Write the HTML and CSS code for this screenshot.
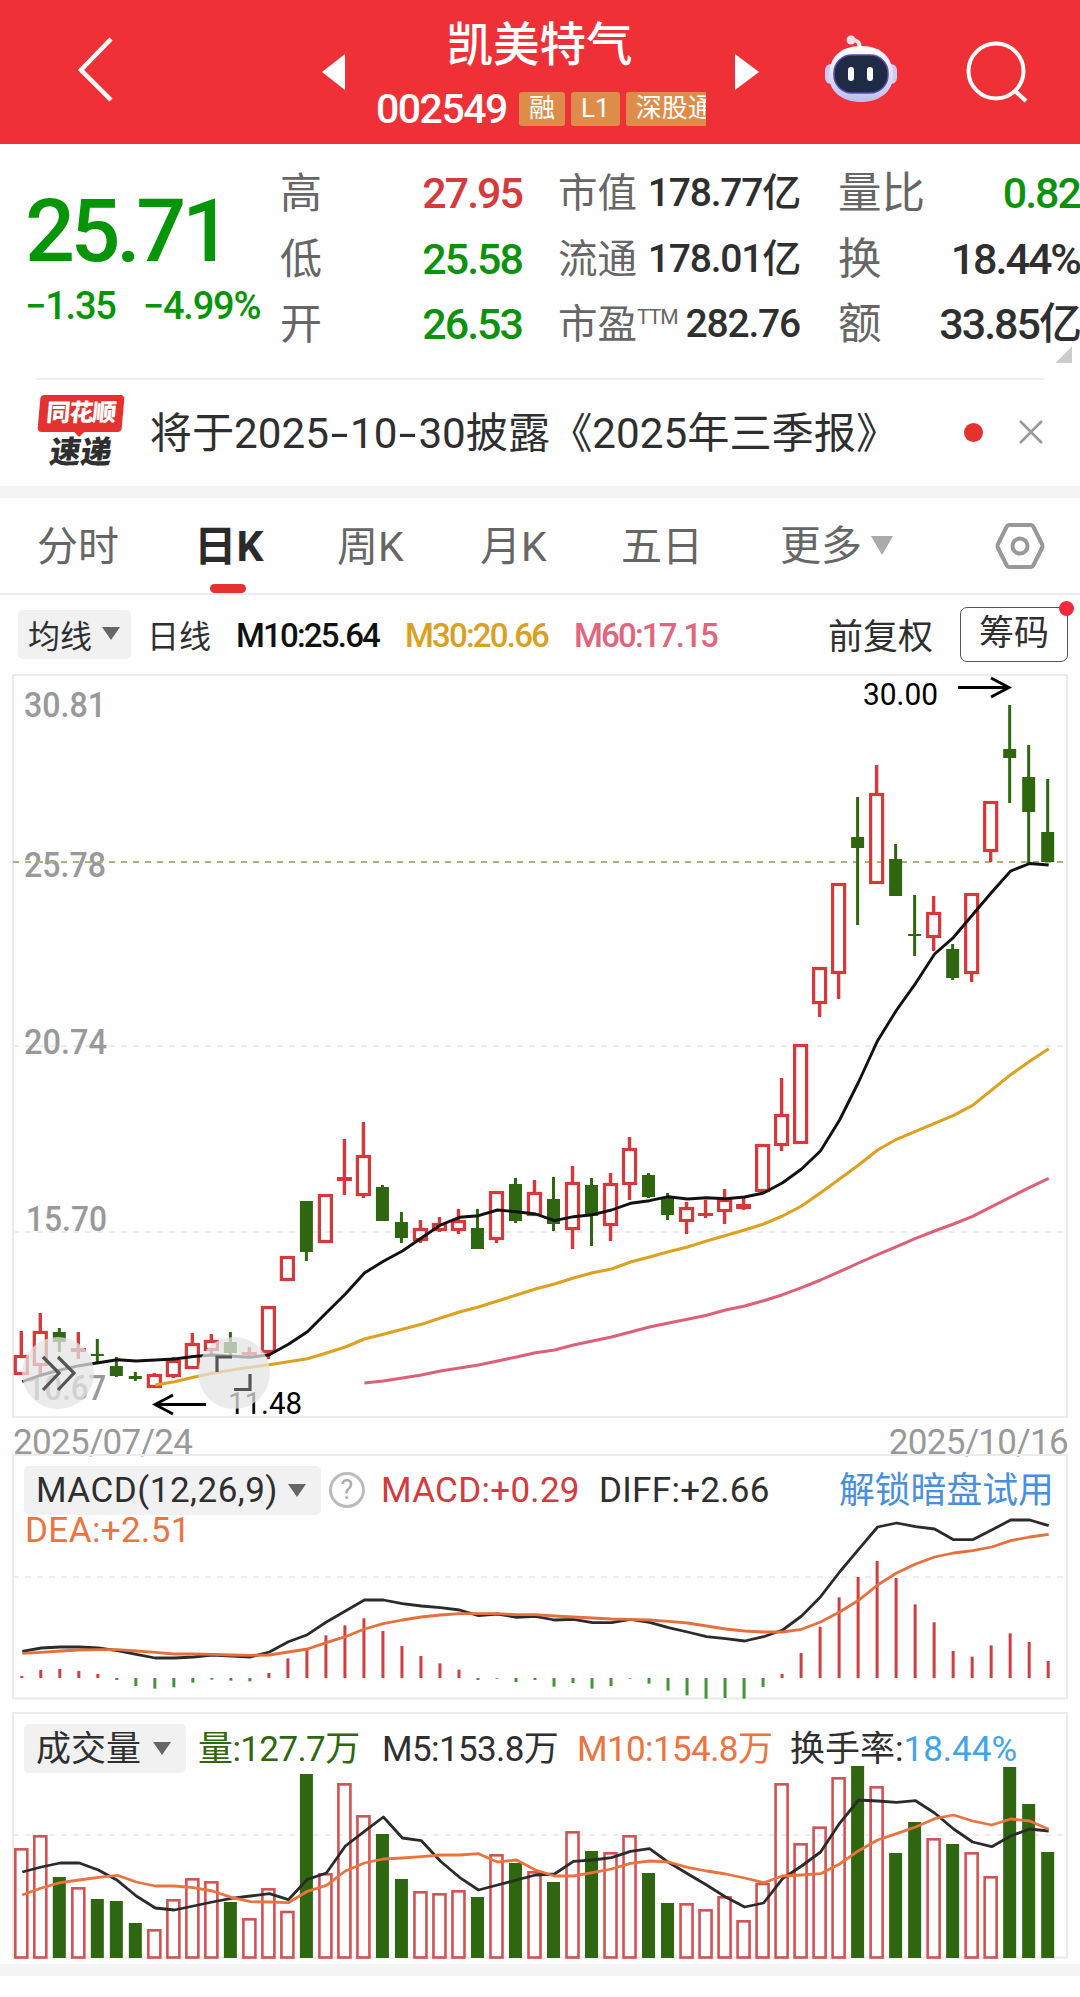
FILE: index.html
```html
<!DOCTYPE html>
<html lang="zh-CN">
<head>
  <meta charset="UTF-8">
  <meta name="viewport" content="width=device-width, initial-scale=1.0">
  <title>凯美特气 002549</title>
  <link rel="stylesheet" href="styles.css">
</head>
<body>
  <header class="topbar">
    <svg class="back" width="40" height="70" viewBox="0 0 40 70"><path d="M36 4 L6 35 L36 65" fill="none" stroke="#fff" stroke-width="4.5"/></svg>
    <svg class="prev" width="24" height="36" viewBox="0 0 24 36"><path d="M0 18 L23 0 V36 Z" fill="#fff"/></svg>
    <div class="stock">
      <h1>凯美特气</h1>
      <div class="code-row">
        <span class="code">002549</span>
        <span class="tag">融</span>
        <span class="tag">L1</span>
        <span class="tag tag-cut">深股通</span>
      </div>
    </div>
    <svg class="next" width="24" height="36" viewBox="0 0 24 36"><path d="M24 18 L0 0 V36 Z" fill="#fff"/></svg>
    <svg class="robot" width="76" height="72" viewBox="0 0 76 72">
      <defs>
        <linearGradient id="shell" x1="0" y1="0" x2="0" y2="1">
          <stop offset="0" stop-color="#fff"/>
          <stop offset=".6" stop-color="#dcd8fa"/>
          <stop offset="1" stop-color="#b9c0ee"/>
        </linearGradient>
      </defs>
      <path d="M36 14 C38 8 33 6 29 6" fill="none" stroke="#eee4f6" stroke-width="4" stroke-linecap="round"/>
      <circle cx="28" cy="6" r="4.5" fill="#f6dcea"/>
      <rect x="2" y="30" width="12" height="20" rx="6" fill="#c9cdf5"/>
      <rect x="62" y="30" width="12" height="20" rx="6" fill="#c9cdf5"/>
      <path d="M38 12 C59 12 70 24 70 42 C70 58 56 68 38 68 C20 68 6 58 6 42 C6 24 17 12 38 12 Z" fill="url(#shell)"/>
      <rect x="11" y="21" width="54" height="38" rx="18" fill="#1f2a44" stroke="#5a4bb0" stroke-width="1.500"/>
      <rect x="25" y="33" width="6" height="14" rx="3" fill="#fff"/>
      <rect x="44" y="33" width="6" height="14" rx="3" fill="#fff"/>
    </svg>
    <svg class="search" width="64" height="64" viewBox="0 0 64 64"><circle cx="31" cy="30" r="27.5" fill="none" stroke="#fff" stroke-width="4"/><path d="M49 49 L61 60" stroke="#fff" stroke-width="4"/></svg>
  </header>

  <section class="quote">
    <div class="price">
      <div class="last">25.71</div>
      <div class="change"><span>−1.35</span><span>−4.99%</span></div>
    </div>
    <dl class="stats stats-a">
      <dt>高</dt><dd class="up">27.95</dd>
      <dt>低</dt><dd class="down">25.58</dd>
      <dt>开</dt><dd class="down">26.53</dd>
    </dl>
    <dl class="stats stats-b">
      <dt>市值</dt><dd>178.77亿</dd>
      <dt>流通</dt><dd>178.01亿</dd>
      <dt>市盈<sup>TTM</sup></dt><dd>282.76</dd>
    </dl>
    <dl class="stats stats-c">
      <dt>量比</dt><dd class="down">0.82</dd>
      <dt>换</dt><dd>18.44%</dd>
      <dt>额</dt><dd>33.85亿</dd>
    </dl>
    <i class="corner"></i>
  </section>

  <section class="notice">
    <div class="brand">
      <span class="brand-top">同花顺</span>
      <span class="brand-bottom">速递</span>
    </div>
    <p>将于2025<b>-</b>10<b>-</b>30披露《2025年三季报》</p>
    <i class="dot"></i>
    <svg width="26" height="26" viewBox="0 0 26 26"><path d="M2 2 L24 24 M24 2 L2 24" stroke="#999" stroke-width="2.6"/></svg>
  </section>

  <nav class="tabs">
    <a>分时</a>
    <a class="active">日K</a>
    <a>周K</a>
    <a>月K</a>
    <a>五日</a>
    <a class="more">更多<i class="caret caret-light"></i></a>
    <svg class="setting" width="50" height="48" viewBox="0 0 50 48">
      <path d="M14 3 H36 Q37.500 3 38.500 5 L47 22 Q48 24 47 26 L38.500 43 Q37.500 45 36 45 H14 Q12.500 45 11.500 43 L3 26 Q2 24 3 22 L11.500 5 Q12.500 3 14 3 Z" fill="none" stroke="#999" stroke-width="4"/>
      <circle cx="25" cy="24" r="7.500" fill="none" stroke="#999" stroke-width="4"/>
    </svg>
  </nav>

  <div class="ma-row">
    <span class="select select-ma">均线<i class="caret"></i></span>
    <span class="period">日线</span>
    <span class="ma ma10">M10:25.64</span>
    <span class="ma ma30">M30:20.66</span>
    <span class="ma ma60">M60:17.15</span>
    <span class="adjust">前复权</span>
    <span class="chips">筹码<i class="dot"></i></span>
  </div>

  <svg id="kline" class="kline" width="1080" height="752" viewBox="0 670 1080 752"></svg>
  <div class="dates"><span>2025/07/24</span><span>2025/10/16</span></div>

  <section class="panel macd">
    <svg id="macd" class="plot" width="1080" height="246" viewBox="0 1454 1080 246"></svg>
    <div class="panel-head">
      <span class="select select-macd">MACD(12,26,9)<i class="caret"></i></span>
      <span class="help">?</span>
      <span class="v-macd">MACD:+0.29</span>
      <span class="v-diff">DIFF:+2.66</span>
      <a class="unlock">解锁暗盘试用</a>
    </div>
    <div class="v-dea">DEA:+2.51</div>
  </section>

  <section class="panel volume">
    <svg id="volume" class="plot" width="1080" height="250" viewBox="0 1710 1080 250"></svg>
    <div class="panel-head">
      <span class="select select-vol"><span>成交量</span><i class="caret"></i></span>
      <span class="v-vol">量:127.7万</span>
      <span class="v-m5">M5:153.8万</span>
      <span class="v-m10">M10:154.8万</span>
      <span class="v-rate">换手率:<em>18.44%</em></span>
    </div>
  </section>
  <div class="band"></div>

  <script src="charts.js"></script>
</body>
</html>
```
FILE: styles.css
```css
* {
  box-sizing: border-box;
}

body {
  margin: 0;
  width: 1080px;
  height: 1997px;
  overflow: hidden;
  background: #fefefe;
  color: #2f2f2f;
  font-family: Roboto, "Noto Sans CJK SC", sans-serif;
}

i, em {
  font-style: normal;
}

/* Top bar */
.topbar {
  display: flex;
  height: 144px;
  background: #ef3137;
  color: #fff;
}

.back { margin: 35px 0 0 75px; }
.prev { margin: 54px 0 0 207px; }
.next { margin: 54px 0 0 29px; }
.robot { margin: 34px 0 0 64px; }
.search { margin: 41px 0 0 66px; }

.stock {
  width: 330px;
  margin-left: 30px;
}

.stock h1 {
  margin: 14px 0 0;
  padding-right: 3px;
  font-size: 46.5px;
  font-weight: 500;
  line-height: 62px;
  text-align: center;
}

.code-row {
  display: flex;
  align-items: center;
  height: 66px;
  overflow: hidden;
}

.code {
  width: 143px;
  font-size: 41px;
  font-weight: 500;
  letter-spacing: -1.5px;
}

.tag {
  flex: none;
  height: 34px;
  margin-right: 6px;
  padding: 0 10px;
  border-radius: 3px;
  background: #df8c4a;
  font-size: 26px;
  line-height: 33px;
}

.tag-cut {
  width: 80px;
  margin-right: 0;
  border-radius: 3px 0 0 3px;
  overflow: hidden;
  white-space: nowrap;
}

/* Quote */
.quote {
  position: relative;
  display: flex;
  height: 234px;
  padding-top: 17px;
}

.price {
  width: 280px;
  padding-left: 25px;
  color: #079508;
}

.last {
  height: 104px;
  padding-top: 22px;
  font-size: 88px;
  font-weight: 500;
  line-height: 96px;
  letter-spacing: -4.4px;
}

.change {
  display: flex;
  gap: 27px;
  margin-top: 19px;
  font-size: 38px;
  font-weight: 500;
  line-height: 44px;
  letter-spacing: -1.2px;
}

.stats {
  display: grid;
  grid-template-columns: 88px 1fr;
  grid-auto-rows: 65.5px;
  margin: 0;
  line-height: 65px;
  white-space: nowrap;
}

.stats dt {
  color: #666;
  font-size: 42px;
}

.stats dd {
  margin: 0;
  text-align: right;
  font-size: 43px;
  font-weight: 500;
  letter-spacing: -2px;
}

.stats-a { width: 242px; }
.stats-b { width: 242px; margin-left: 36px; grid-template-columns: 80px 1fr; }
.stats-b dt { font-size: 39.5px; }
.stats-b dd { font-size: 39px; letter-spacing: -1.2px; }
.stats-c { width: 242px; margin-left: 38px; }
.stats-c dt { font-size: 43.5px; }

.stats sup {
  font-size: 21px;
  font-weight: 400;
  line-height: 1;
  vertical-align: 14px;
  letter-spacing: -1px;
}

.stats .up { color: #d63a3c; }
.stats .down { color: #0d920e; }

.corner {
  position: absolute;
  right: 8px;
  bottom: 15px;
  width: 17px;
  height: 17px;
  background: linear-gradient(135deg, transparent 50%, #ccc 50%);
}

/* Notice */
.notice {
  display: flex;
  align-items: center;
  height: 108px;
  margin: 0 36px;
  padding-bottom: 2px;
  border-top: 2px solid #eee;
}

.brand {
  position: relative;
  width: 84px;
  height: 74px;
  margin-left: 3px;
  text-align: center;
  font-weight: 900;
}

.brand-top {
  display: block;
  height: 37px;
  background: #e5322f;
  border-radius: 4px;
  color: #fff;
  font-size: 24px;
  line-height: 36px;
  letter-spacing: -1px;
  transform: skewX(-5deg);
}

.brand-top::after {
  content: "";
  position: absolute;
  left: 36px;
  top: 36px;
  border: 6px solid transparent;
  border-top-color: #e5322f;
  border-bottom: 0;
}

.brand-bottom {
  display: block;
  margin-top: 4px;
  font-size: 31px;
  line-height: 34px;
  transform: skewX(-8deg);
}

.notice p {
  width: 817px;
  margin: 0 0 0 27px;
  padding-bottom: 6px;
  font-size: 42.2px;
  white-space: nowrap;
}

.notice p b {
  display: inline-block;
  width: 21px;
  font-weight: 400;
  text-align: center;
  transform: scaleX(1.5);
}

.dot {
  width: 19px;
  height: 19px;
  border-radius: 50%;
  background: #e5322f;
}

.notice svg {
  margin-left: 35px;
}

/* Tabs */
.tabs {
  display: flex;
  height: 109px;
  border-top: 12px solid #f4f4f4;
  border-bottom: 2px solid #ebebeb;
  padding-left: 37px;
  color: #666;
  font-size: 41px;
  line-height: 98px;
}

.tabs a {
  position: relative;
  width: 143px;
}

.tabs a:first-child { width: 157px; }
.tabs a:nth-child(4) { width: 141px; }
.tabs a:nth-child(5) { width: 159px; }

.tabs .active {
  color: #2b2b2b;
  font-size: 42.5px;
  font-weight: 700;
}

.tabs .active::after {
  content: "";
  position: absolute;
  left: 16px;
  bottom: 0;
  width: 36px;
  height: 9px;
  border-radius: 5px;
  background: #e5322f;
}

.tabs .more {
  display: flex;
  align-items: center;
  width: 215px;
}

.setting {
  margin-top: 24px;
}

.caret {
  display: inline-block;
  border: 9px solid transparent;
  border-top: 13px solid #666;
  border-bottom: 0;
}

.caret-light {
  margin-left: 9px;
  border-width: 19px 11px 0;
  border-top-color: #aaa;
}

/* Moving average row */
.ma-row {
  display: flex;
  align-items: center;
  height: 75px;
  padding: 3px 12px 0 18px;
  font-size: 32px;
}

.select {
  display: flex;
  align-items: center;
  justify-content: space-between;
  height: 49px;
  border-radius: 5px;
  background: #f1f1f1;
}

.select-ma {
  width: 113px;
  padding: 0 11px 1px 10px;
}

.period {
  width: 89px;
  margin-left: 16px;
}

.ma {
  width: 169px;
  padding-top: 3px;
  font-size: 33px;
  font-weight: 500;
  letter-spacing: -1.8px;
}

.ma10 { color: #111; }
.ma30 { color: #d9a021; }
.ma60 { color: #e0657d; }

.adjust {
  margin-left: 85px;
  padding-bottom: 2px;
  width: 132px;
  font-size: 35px;
}

.chips {
  position: relative;
  width: 108px;
  height: 55px;
  margin-right: -1px;
  border: 1.5px solid #555;
  border-radius: 7px;
  font-size: 35px;
  line-height: 52px;
  text-align: center;
}

.chips .dot {
  position: absolute;
  right: -7px;
  top: -7px;
  width: 15px;
  height: 15px;
  background: #f42a3c;
}

/* Charts */
.kline {
  display: block;
}

.axis {
  fill: #999;
  font-size: 35px;
  font-weight: 500;
}

.mark {
  fill: #000;
  font-size: 32px;
}

.dates {
  display: flex;
  justify-content: space-between;
  height: 32px;
  padding: 0 12px 0 13px;
  color: #999;
  font-size: 35px;
  line-height: 42px;
  letter-spacing: -.7px;
}

.panel {
  position: relative;
  font-size: 35px;
}

.macd { height: 256px; padding-top: 12px; }
.volume { height: 254px; padding-top: 14px; }

.plot {
  position: absolute;
  left: 0;
  top: 0;
}

.panel-head {
  position: relative;
  display: flex;
  align-items: center;
  height: 48px;
  padding-left: 24px;
  white-space: nowrap;
}

.select-macd {
  width: 297px;
  padding: 0 15px 0 12px;
  letter-spacing: .5px;
}

.help {
  width: 36px;
  height: 36px;
  margin-left: 8px;
  border: 3px solid #bbb;
  border-radius: 50%;
  color: #aaa;
  font-size: 27px;
  line-height: 31px;
  text-align: center;
}

.v-macd {
  width: 218px;
  margin-left: 16px;
  color: #d63a3c;
  letter-spacing: .3px;
}

.v-diff {
  width: 240px;
  letter-spacing: .3px;
}

.unlock {
  padding-bottom: 6px;
  color: #4a8fdd;
  font-size: 35.8px;
}

.v-dea {
  position: relative;
  padding-left: 25px;
  color: #eb7440;
  line-height: 34px;
  letter-spacing: .4px;
}

.select-vol {
  width: 162px;
  padding: 0 15px 0 12px;
}

.select-vol span,
.v-vol, .v-m5, .v-m10, .v-rate {
  padding-bottom: 6px;
}

.v-vol, .v-m5, .v-m10 {
  letter-spacing: -.6px;
}

.v-vol { width: 184px; margin-left: 12px; color: #2f6610; }
.v-m5 { width: 195px; }
.v-m10 { width: 213px; color: #eb7440; }
.v-rate em { color: #3fa5e8; }

.band {
  height: 12px;
  background: #f4f4f5;
}
```
FILE: charts.js
```javascript
const RED = '#d5393b';
const GREEN = '#2f6610';
const STEP = 19.007;
const cx = i => 21.3 + i * STEP;

// [colour, high, body top, body bottom, low]
const candles = [
  ['r',1331,1355,1375,1375],['r',1313,1331,1366,1377],['g',1328,1332,1342,1352],['r',1332,1348,1352,1359],['g',1339,1354,1356,1362],
  ['g',1357,1366,1376,1377],['g',1372,1376,1379,1381],['r',1373,1374,1388,1388],['r',1357,1360,1377,1378],['r',1333,1343,1369,1369],
  ['r',1334,1340,1351,1355],['g',1332,1342,1353,1355],['r',1347,1352,1355,1357],['r',1306,1306,1353,1359],['r',1256,1256,1281,1281],
  ['g',1201,1201,1252,1261],['r',1194,1194,1243,1243],['r',1139,1177,1181,1195],['r',1122,1155,1196,1198],['g',1185,1187,1221,1221],
  ['g',1212,1222,1238,1243],['r',1220,1228,1241,1243],['r',1217,1223,1231,1232],['r',1209,1220,1231,1234],['g',1209,1228,1249,1249],
  ['r',1191,1191,1240,1243],['g',1178,1184,1221,1223],['r',1180,1192,1216,1216],['g',1177,1199,1224,1231],['r',1166,1182,1230,1249],
  ['g',1178,1185,1216,1246],['r',1173,1183,1226,1241],['r',1137,1148,1185,1200],['g',1173,1175,1197,1198],['g',1193,1197,1215,1220],
  ['r',1202,1207,1222,1234],['r',1200,1213,1216,1218],['r',1189,1199,1212,1224],['r',1198,1204,1209,1210],['r',1144,1144,1192,1192],
  ['r',1078,1114,1146,1151],['r',1044,1044,1144,1144],['r',967,967,1004,1017],['r',883,883,974,999],['g',797,837,848,925],
  ['r',765,793,884,884],['g',844,859,896,896],['g',895,934,936,956],['r',896,912,938,951],['g',944,949,978,980],
  ['r',893,893,974,982],['r',801,801,852,862],['g',705,749,758,803],['g',745,777,812,863],['g',779,832,862,862]
];

const ma10 = [1381.7,1375,1370,1365.7,1362.7,1359.7,1361,1360,1359,1356.5,1355,1356.3,1357.3,1354.7,1344.3,1331.7,1312.7,1294,1273,1261.3,1251,1238,1225,1217.3,1215.7,1210,1211.7,1214,1220.7,1216.7,1214.7,1210,1203.3,1200.7,1196.7,1199,1197.7,1198.7,1197,1193,1182.7,1169,1150.7,1120,1082,1040.7,1010,983.3,954,937.3,914.7,892.3,871,863.5,865];
const ma30 = [1385,1381.7,1377.3,1373.3,1370,1367.3,1364.7,1361.7,1358.7,1353,1347,1339,1334.2,1329.3,1324.3,1318,1312,1307,1301,1295,1289,1284,1278,1272.7,1269,1262,1257,1251.7,1247,1241,1235.5,1230,1224,1216,1206,1192.7,1179,1165,1150,1139.3,1131.3,1123.3,1115.3,1105.3,1090,1074.7,1061.3,1048.7];
const ma60 = [1383,1381,1378,1375,1371,1368,1365,1361,1357,1352.7,1350,1345,1341,1337,1332,1327,1323,1319.3,1315.3,1310,1306,1300.7,1294.7,1287.7,1280,1271.7,1263,1254.7,1246.7,1238.3,1231,1224,1216.3,1206.7,1197,1187.3,1178.3];

// offsets inside the MACD and volume panels, three units per pixel
const hist = [708,690,687,693,702,720,738,746,742,728,719,722,724,699,655,628,586,556,535,573,618,648,670,689,720,716,726,720,740,729,746,738,716,731,752,766,776,774,776,741,702,639,560,472,411,363,414,493,547,633,650,616,580,606,663];
const diff = [634,624,621,621,624,632,643,654,654,651,645,648,651,636,605,584,546,513,480,480,491,498,503,510,527,522,532,529,540,538,548,548,538,547,563,576,590,596,603,590,570,528,470,396,328,261,249,260,267,299,299,270,240,240,257];
const dea = [640,637,633,630,629,629,633,637,642,642,643,645,646,645,636,627,608,590,567,551,540,531,525,521,521,521,524,524,528,531,534,537,538,540,544,549,558,567,573,576,576,568,546,516,481,435,399,372,351,339,332,321,302,291,283];
const vol = [445,406,531,562,597,603,669,688,598,535,544,606,655,565,633,222,520,250,346,402,537,574,580,571,591,463,489,514,546,394,453,457,406,519,609,610,628,589,661,549,250,430,380,232,198,259,459,366,415,432,457,529,201,312,456];
const volM5 = [516,501,489,489,510,541,588,624,630,618,606,595,588,581,599,538,519,438,394,351,414,422,484,532,570,555,540,525,522,484,480,473,454,446,487,521,555,591,621,609,536,498,456,370,300,303,307,302,339,387,426,440,408,387,393];
const volM10 = [585,564,548,540,532,526,546,558,558,563,573,592,605,606,608,574,556,513,489,477,474,470,465,465,461,486,480,510,528,528,518,507,490,483,486,502,513,522,534,548,528,525,521,492,452,420,401,381,356,345,363,375,357,363,388];

function line(ys, start, color, width) {
  const pts = ys.map((y, i) => `${(cx(i + start) + 1).toFixed(1)},${y.toFixed(1)}`).join(' ');
  return `<polyline points="${pts}" fill="none" stroke="${color}" stroke-width="${width}" stroke-linejoin="round"/>`;
}

function frame(top, bottom) {
  return `<rect x="13" y="${top}" width="1054" height="${bottom - top}" fill="none" stroke="#ebebeb" stroke-width="2"/>`;
}

function grid(y, color = '#ededed') {
  return `<path d="M13 ${y} H1063" stroke="${color}" stroke-width="2" stroke-dasharray="6 6"/>`;
}

function label(x, y, text, width, cls = 'axis') {
  return `<text class="${cls}" x="${x}" y="${y}" textLength="${width}" lengthAdjust="spacingAndGlyphs">${text}</text>`;
}

function drawKline() {
  let s = frame(675, 1417) + grid(1046) + grid(1232);
  s += label(24, 717, '30.81', 82) + label(24, 877, '25.78', 82) + label(24, 1054, '20.74', 83) +
       label(26, 1231, '15.70', 81) + label(27, 1400, '10.67', 79);
  s += grid(862, '#aab27c');
  candles.forEach(([c, hi, top, bot, lo], i) => {
    const x = cx(i);
    if (c === 'g') {
      s += `<path d="M${x} ${hi} V${lo}" stroke="${GREEN}" stroke-width="3"/>`;
      s += `<rect x="${x - 6.5}" y="${top}" width="13" height="${bot - top}" fill="${GREEN}"/>`;
    } else {
      s += `<path d="M${x} ${hi} V${top} M${x} ${bot} V${lo}" stroke="${RED}" stroke-width="3.4"/>`;
      if (bot - top < 7) {
        s += `<rect x="${x - 7.5}" y="${top}" width="15" height="${bot - top}" fill="${RED}"/>`;
      } else {
        s += `<rect x="${x - 6}" y="${top + 1.5}" width="12" height="${bot - top - 3}" fill="none" stroke="${RED}" stroke-width="3.2"/>`;
      }
    }
  });
  s += line(ma60, 18, '#dd6079', 3) + line(ma30, 7, '#dda01f', 3) + line(ma10, 0, '#111', 2.9);
  // highest and lowest price marks
  s += label(863, 705, '30.00', 75, 'mark') + label(228, 1414, '11.48', 74, 'mark');
  s += '<path d="M958 687.500 H1009 M991 678 L1009 687.500 L991 697 M206 1404.500 H155 M173 1395 L155 1404.500 L173 1414" fill="none" stroke="#000" stroke-width="2.8"/>';
  // floating buttons
  s += '<circle cx="58" cy="1373" r="36" fill="#e4e4e4" fill-opacity=".74"/><circle cx="234" cy="1373" r="36" fill="#e4e4e4" fill-opacity=".74"/>';
  s += '<path d="M43 1357 L59 1373 L43 1390 M58 1357 L74 1373 L58 1390 M217 1372 V1357 H232 M234 1389.500 H250 V1374" fill="none" stroke="#555" stroke-width="3.2"/>';
  document.getElementById('kline').innerHTML = s;
}

function drawMacd() {
  let s = frame(1455, 1698.5) + grid(1577);
  hist.forEach((v, i) => {
    s += `<path d="M${cx(i) + .5} 1678 V${1440 + v / 3}" stroke="${v < 714 ? '#cf3f42' : '#43953a'}" stroke-width="3"/>`;
  });
  s += line(diff.map(v => 1440 + v / 3), 0, '#2b2b2b', 2.8) + line(dea.map(v => 1440 + v / 3), 0, '#e5703c', 2.8);
  document.getElementById('macd').innerHTML = s;
}

function drawVolume() {
  let s = frame(1713, 1957.5) + grid(1835);
  vol.forEach((v, i) => {
    const x = cx(i);
    const y = 1700 + v / 3;
    if (candles[i][0] === 'g') {
      s += `<rect x="${x - 6.5}" y="${y}" width="13" height="${1958 - y}" fill="${GREEN}"/>`;
    } else {
      s += `<rect x="${x - 6}" y="${y + 1}" width="12" height="${1956.5 - y}" fill="none" stroke="#d25254" stroke-width="2.6"/>`;
    }
  });
  s += line(volM5.map(v => 1700 + v / 3), 0, '#2b2b2b', 2.8) + line(volM10.map(v => 1700 + v / 3), 0, '#e97440', 2.8);
  document.getElementById('volume').innerHTML = s;
}

drawKline();
drawMacd();
drawVolume();
```
